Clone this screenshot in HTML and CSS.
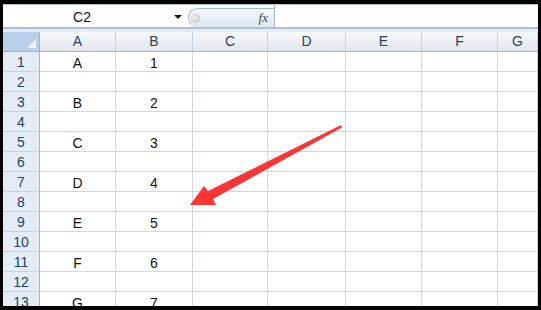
FILE: index.html
```html
<!DOCTYPE html>
<html lang="en">
<head>
  <meta charset="UTF-8">
  <meta name="viewport" content="width=device-width, initial-scale=1.0">
  <title>Sheet</title>
  <link rel="stylesheet" href="styles.css">
</head>
<body>
  <div class="frame">
    <div class="formula-bar">
      <div class="name-box">
        <span class="cell-ref">C2</span>
        <span class="drop"></span>
      </div>
      <div class="fx-pill">
        <span class="knob"></span>
        <span class="fx">fx</span>
      </div>
      <div class="formula-input"></div>
    </div>

    <div class="gap"></div>

    <div class="sheet">
      <div class="grid">
        <div class="corner"></div>
        <div class="col-head">A</div>
        <div class="col-head">B</div>
        <div class="col-head">C</div>
        <div class="col-head">D</div>
        <div class="col-head">E</div>
        <div class="col-head">F</div>
        <div class="col-head">G</div>

        <div class="row-head">1</div><div class="cell">A</div><div class="cell">1</div><div class="cell"></div><div class="cell"></div><div class="cell"></div><div class="cell"></div><div class="cell"></div>
        <div class="row-head">2</div><div class="cell"></div><div class="cell"></div><div class="cell"></div><div class="cell"></div><div class="cell"></div><div class="cell"></div><div class="cell"></div>
        <div class="row-head">3</div><div class="cell">B</div><div class="cell">2</div><div class="cell"></div><div class="cell"></div><div class="cell"></div><div class="cell"></div><div class="cell"></div>
        <div class="row-head">4</div><div class="cell"></div><div class="cell"></div><div class="cell"></div><div class="cell"></div><div class="cell"></div><div class="cell"></div><div class="cell"></div>
        <div class="row-head">5</div><div class="cell">C</div><div class="cell">3</div><div class="cell"></div><div class="cell"></div><div class="cell"></div><div class="cell"></div><div class="cell"></div>
        <div class="row-head">6</div><div class="cell"></div><div class="cell"></div><div class="cell"></div><div class="cell"></div><div class="cell"></div><div class="cell"></div><div class="cell"></div>
        <div class="row-head">7</div><div class="cell">D</div><div class="cell">4</div><div class="cell"></div><div class="cell"></div><div class="cell"></div><div class="cell"></div><div class="cell"></div>
        <div class="row-head">8</div><div class="cell"></div><div class="cell"></div><div class="cell"></div><div class="cell"></div><div class="cell"></div><div class="cell"></div><div class="cell"></div>
        <div class="row-head">9</div><div class="cell">E</div><div class="cell">5</div><div class="cell"></div><div class="cell"></div><div class="cell"></div><div class="cell"></div><div class="cell"></div>
        <div class="row-head">10</div><div class="cell"></div><div class="cell"></div><div class="cell"></div><div class="cell"></div><div class="cell"></div><div class="cell"></div><div class="cell"></div>
        <div class="row-head">11</div><div class="cell">F</div><div class="cell">6</div><div class="cell"></div><div class="cell"></div><div class="cell"></div><div class="cell"></div><div class="cell"></div>
        <div class="row-head">12</div><div class="cell"></div><div class="cell"></div><div class="cell"></div><div class="cell"></div><div class="cell"></div><div class="cell"></div><div class="cell"></div>
        <div class="row-head">13</div><div class="cell">G</div><div class="cell">7</div><div class="cell"></div><div class="cell"></div><div class="cell"></div><div class="cell"></div><div class="cell"></div>
      </div>

      <!-- red pointer drawn on top of the sheet -->
      <svg class="pointer" width="541" height="310" viewBox="0 0 541 310">
        <polygon points="341,125 208,191 204,186 190,205 216,205 213,199 342,127.5" fill="#fd3535"/>
      </svg>
    </div>
  </div>
</body>
</html>
```

FILE: styles.css
```css
body {
  margin: 0;
  background: #000;
  font-family: "Liberation Sans", Arial, sans-serif;
}

.frame {
  width: 535px;
  height: 302px;
  margin: 4px 3px 4px 3px;
  background: #fff;
  overflow: hidden;
  display: flex;
  flex-direction: column;
}

.formula-bar {
  flex-shrink: 0;
  height: 22px;
  display: flex;
  border-top: 1px solid #b6c6da;
  border-bottom: 2px solid #a9c0dc;
  background: #fff;
}

.name-box {
  width: 184px;
  display: flex;
  align-items: center;
}

.cell-ref {
  flex: 1;
  text-align: center;
  font-size: 14px;
  color: #111;
  padding-right: 13px;
  padding-top: 2px;
}

.drop {
  width: 0;
  height: 0;
  border-left: 4px solid transparent;
  border-right: 4px solid transparent;
  border-top: 4px solid #111;
  margin-right: 5px;
  margin-top: 1px;
}

.fx-pill {
  width: 86px;
  margin: 3px 0 0 1px;
  display: flex;
  align-items: center;
  justify-content: space-between;
  border: 1px solid #a7bad3;
  border-right: none;
  border-bottom: none;
  border-radius: 10px 0 0 10px;
  background: linear-gradient(#f4f7fb, #dfe6ef);
  padding: 0 6px 0 2px;
  box-sizing: border-box;
}

.knob {
  width: 9px;
  height: 9px;
  border-radius: 50%;
  background: radial-gradient(circle at 40% 40%, #f2f2f2, #b8b8b8);
}

.fx {
  font-family: "Liberation Serif", "Times New Roman", serif;
  font-style: italic;
  font-size: 13px;
  color: #444;
}

.formula-input {
  flex: 1;
  border-left: 1px solid #a7bad3;
  background: #fff;
}

.gap {
  flex-shrink: 0;
  height: 3px;
  background: #e6ecf4;
}

.sheet {
  position: relative;
  flex: 1;
  min-height: 0;
}

.grid {
  display: grid;
  grid-template-columns: 37px 76px 77px 75px 78px 76px 76px 1fr;
  grid-template-rows: 20px;
  grid-auto-rows: 20px;
}

.corner {
  background: #b9cfea;
  border-right: 1px solid #9eb6ce;
  border-bottom: 1px solid #9eb6ce;
  display: flex;
  justify-content: flex-end;
  align-items: flex-end;
  padding: 0 3px 3px 0;
}

.corner::after {
  content: "";
  width: 9px;
  height: 9px;
  background: #eef3fa;
  clip-path: polygon(100% 0, 100% 100%, 0 100%);
}

.col-head {
  background: linear-gradient(#f7f8fa, #e1e6ee);
  border-right: 1px solid #c5d2e2;
  border-bottom: 1px solid #9eb6ce;
  text-align: center;
  font-size: 14px;
  line-height: 19px;
  color: #27415f;
}

.row-head {
  background: #e4ecf7;
  border-right: 1px solid #9eb6ce;
  border-bottom: 1px solid #c5d2e2;
  text-align: center;
  font-size: 14px;
  line-height: 21px;
  color: #27415f;
}

.cell {
  border-right: 1px solid #d0d7e5;
  border-bottom: 1px solid #d0d7e5;
  text-align: center;
  font-size: 14px;
  line-height: 22px;
  color: #111;
}

.pointer {
  position: absolute;
  left: -3px;
  top: -32px;
  pointer-events: none;
}
```
